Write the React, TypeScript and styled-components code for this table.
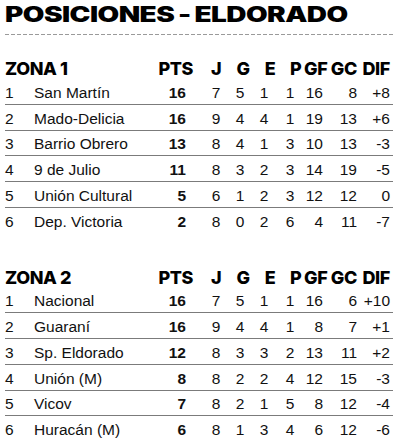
import React from "react";
import styled, { createGlobalStyle } from "styled-components";

// Estilos globales: sin margen, fondo blanco
const GlobalStyle = createGlobalStyle`
  html, body {
    margin: 0;
    padding: 0;
    background: #ffffff;
  }
  body {
    font-family: "Liberation Sans", Arial, sans-serif;
    color: #111;
  }
`;

// Contenedor principal
const Page = styled.div`
  width: 400px;
  height: 445px;
  padding: 0 5px;
  box-sizing: border-box;
  overflow: hidden;
`;

// Título grande (fuente ancha simulada con scaleX)
const Title = styled.h1`
  margin: 0;
  padding-top: 1px;
  height: 28px;
  font-family: "Inter", "Liberation Sans", sans-serif;
  font-weight: 900;
  font-size: 21px;
  line-height: 28px;
  letter-spacing: -0.4px;
  word-spacing: -1px;
  color: #000;
  white-space: nowrap;
  transform: scaleX(1.33);
  transform-origin: left center;
`;

// Línea punteada bajo el título
const Dashed = styled.div`
  margin-top: 5px;
  width: 390px;
  height: 1px;
  background-image: linear-gradient(to right, #9a9a9a 4px, transparent 4px);
  background-size: 6px 1px;
`;

// Tabla de una zona
const Table = styled.div<{ $top: number }>`
  margin-top: ${(p) => p.$top}px;
  width: 388px;
  display: grid;
  grid-template-columns: 29px 116px 54px 24px 24px 24px 28px 19px 34px 36px;
`;

// Fila de la tabla
const Row = styled.div`
  display: contents;
`;

// Celda de encabezado
const Head = styled.div<{ $align?: string; $pad?: number; $left?: number; $span?: number }>`
  grid-column: span ${(p) => p.$span ?? 1};
  font-family: "Inter", "Liberation Sans", sans-serif;
  font-weight: 800;
  font-size: 18px;
  letter-spacing: -0.4px;
  line-height: 20px;
  height: 20px;
  text-align: ${(p) => p.$align ?? "center"};
  padding-right: ${(p) => p.$pad ?? 0}px;
  padding-left: ${(p) => p.$left ?? 0}px;
  color: #000;
  white-space: nowrap;
`;

// Celda de datos
const Cell = styled.div<{ $align?: string; $pad?: number; $bold?: boolean; $line?: boolean }>`
  height: 25.75px;
  box-sizing: border-box;
  display: flex;
  align-items: flex-end;
  justify-content: ${(p) =>
    p.$align === "right" ? "flex-end" : p.$align === "left" ? "flex-start" : "center"};
  padding-right: ${(p) => p.$pad ?? 0}px;
  padding-bottom: 3px;
  font-size: 15.5px;
  line-height: 17px;
  font-weight: ${(p) => (p.$bold ? 700 : 400)};
  color: #111;
  border-bottom: 1.5px solid ${(p) => (p.$line ? "#7b7b7b" : "transparent")};
  white-space: nowrap;
`;

type Team = [string, number, number, number, number, number, number, number, string];

const zona1: Team[] = [
  ["San Martín", 16, 7, 5, 1, 1, 16, 8, "+8"],
  ["Mado-Delicia", 16, 9, 4, 4, 1, 19, 13, "+6"],
  ["Barrio Obrero", 13, 8, 4, 1, 3, 10, 13, "-3"],
  ["9 de Julio", 11, 8, 3, 2, 3, 14, 19, "-5"],
  ["Unión Cultural", 5, 6, 1, 2, 3, 12, 12, "0"],
  ["Dep. Victoria", 2, 8, 0, 2, 6, 4, 11, "-7"],
];

const zona2: Team[] = [
  ["Nacional", 16, 7, 5, 1, 1, 16, 6, "+10"],
  ["Guaraní", 16, 9, 4, 4, 1, 8, 7, "+1"],
  ["Sp. Eldorado", 12, 8, 3, 3, 2, 13, 11, "+2"],
  ["Unión (M)", 8, 8, 2, 2, 4, 12, 15, "-3"],
  ["Vicov", 7, 8, 2, 1, 5, 8, 12, "-4"],
  ["Huracán (M)", 6, 8, 1, 3, 4, 6, 12, "-6"],
];

const Zone: React.FC<{ name: string; teams: Team[]; top: number }> = ({ name, teams, top }) => (
  <Table $top={top}>
    <Head $align="left" $span={2}>
      {name}
    </Head>
    <Head $align="right" $pad={11}>
      PTS
    </Head>
    <Head>J</Head>
    <Head $left={6}>G</Head>
    <Head $left={12}>E</Head>
    <Head $align="left" $left={14}>
      P
    </Head>
    <Head $align="right" $pad={-2}>
      GF
    </Head>
    <Head $align="right">GC</Head>
    <Head $align="right" $pad={3}>
      DIF
    </Head>
    {teams.map((t, i) => {
      const line = i < teams.length - 1;
      return (
        <Row key={t[0]}>
          <Cell $align="left" $line={line}>
            {i + 1}
          </Cell>
          <Cell $align="left" $line={line}>
            {t[0]}
          </Cell>
          <Cell $align="right" $pad={18} $bold $line={line}>
            {t[1]}
          </Cell>
          <Cell $line={line}>{t[2]}</Cell>
          <Cell $line={line}>{t[3]}</Cell>
          <Cell $line={line}>{t[4]}</Cell>
          <Cell $line={line}>{t[5]}</Cell>
          <Cell $align="right" $line={line}>
            {t[6]}
          </Cell>
          <Cell $align="right" $line={line}>
            {t[7]}
          </Cell>
          <Cell $align="right" $pad={3} $line={line}>
            {t[8]}
          </Cell>
        </Row>
      );
    })}
  </Table>
);

const App: React.FC = () => (
  <Page>
    <GlobalStyle />
    <Title>POSICIONES - ELDORADO</Title>
    <Dashed />
    <Zone name="ZONA 1" teams={zona1} top={24} />
    <Zone name="ZONA 2" teams={zona2} top={34} />
  </Page>
);

export default App;
